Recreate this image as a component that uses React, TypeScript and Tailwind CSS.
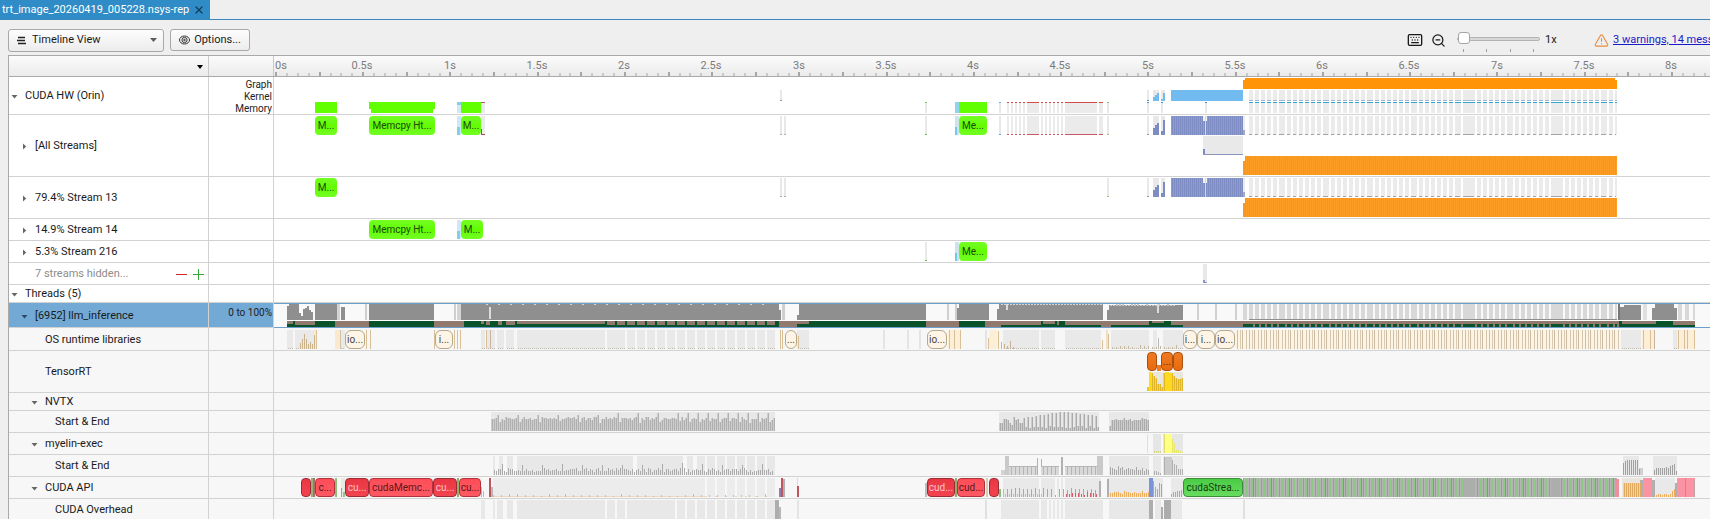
import React, { useState } from 'react';
import { TriangleAlert, ZoomOut, Keyboard, X } from 'lucide-react';

// x position of the first pixel of the tracks; all event data below uses window x
const ORIGIN = 274;

type Rect = [x: number, y: number, w: number, h: number, fill: string];

interface Block {
  x: number;
  w: number;
  y?: number;
  text?: string;
  tone: keyof typeof TONES;
}

interface RowProps {
  label: string;
  level: number;
  height: string;
  open?: boolean;
  caption?: React.ReactNode;
  muted?: boolean;
  selected?: boolean;
  actions?: React.ReactNode;
  blocks?: Block[];
  children?: React.ReactNode;
}

const TONES = {
  lime: 'bg-linear-to-b from-[#74ff22] via-[#62fb00] to-[#74ff22] text-[#1d4a08] rounded',
  cream: 'bg-[#fef5e6] border border-[#b7a78b] text-[#4a453c] rounded-md',
  red: 'bg-linear-to-b from-[#ff4d58] to-[#fd5964] border border-[#b0333c] text-[#5c161b] rounded',
  crimson: 'bg-linear-to-b from-[#e93743] to-[#f24350] border border-[#9c2b34] text-[#ffc3c8] rounded',
  green: 'bg-linear-to-b from-[#4bcb45] to-[#67dc60] border border-[#3c8f38] text-[#143d12] rounded',
  orange: 'bg-linear-to-b from-[#ee7a22] to-[#e96a0c] border border-[#a9500e] text-[#5a2a06] rounded',
};

const noise = (i: number) => {
  const v = Math.sin(i * 12.9898 + 4.1) * 43758.5453;
  return v - Math.floor(v);
};

const range = (n: number) => Array.from({ length: n }, (_, i) => i);

function Rects({ items }: { items: Rect[] }) {
  return (
    <>
      {items.map(([x, y, w, h, fill], i) => (
        <rect key={i} x={x} y={y} width={w} height={h} fill={fill} />
      ))}
    </>
  );
}

interface BarsProps {
  x: number;
  base: number;
  heights: number[];
  fill: string;
  step?: number;
  w?: number;
}

function Bars({ x, base, heights, fill, step = 2, w = 1 }: BarsProps) {
  const d = heights.map((h, i) => `M${x + i * step} ${base}v${-h}h${w}v${h}z`).join('');
  return <path d={d} fill={fill} />;
}

// graph launches of the inference loop: one slot per decode step, some of them merged
const STEPS: [number, number][] = [];
{
  let x = 1249;
  let i = 0;
  while (x < 1616) {
    const merged = i === 34 || i === 47;
    const w = merged ? 12 : i % 7 === 5 ? 6 : 4;
    STEPS.push([x, Math.min(w, 1617 - x)]);
    x += w + 2;
    i += 1;
  }
}

const RED_SLOTS: [number, number][] = [
  [1007, 2], [1011, 2], [1015, 2], [1019, 2], [1023, 2], [1027, 12],
  [1041, 2], [1045, 2], [1049, 2], [1053, 2], [1057, 2], [1061, 2],
  [1065, 32], [1099, 4],
];

function StepLane({ y, h, children }: { y: number; h: number; children?: React.ReactNode }) {
  return (
    <>
      {STEPS.map(([x, w]) => (
        <rect key={x} x={x} y={y} width={w} height={h} fill="#ebebeb" />
      ))}
      {children}
    </>
  );
}

function Patterns() {
  return (
    <svg className="absolute size-0" aria-hidden="true">
      <defs>
        <pattern id="p-orange" width="6" height="19" patternUnits="userSpaceOnUse">
          <rect width="6" height="19" fill="#fd9c22" />
          <rect x="1" width="1" height="19" fill="#f59422" />
          <rect x="3" width="1" height="19" fill="#e39a44" />
          <rect x="5" width="1" height="19" fill="#e39b48" />
        </pattern>
        <pattern id="p-purple" width="2" height="19" patternUnits="userSpaceOnUse">
          <rect width="2" height="19" fill="#8d9cd2" />
          <rect width="1" height="19" fill="#7d8cc2" />
        </pattern>
        <pattern id="p-green" width="18" height="19" patternUnits="userSpaceOnUse">
          <rect width="18" height="19" fill="#b5b5b5" />
          <rect x="1" width="1" height="19" fill="#9a9a9a" />
          <rect x="3" width="3" height="19" fill="#8dc685" />
          <rect x="7" width="1" height="19" fill="#9a9a9a" />
          <rect x="9" width="2" height="19" fill="#8dc685" />
          <rect x="11" width="1" height="19" fill="#6fa869" />
          <rect x="13" width="1" height="19" fill="#9a9a9a" />
          <rect x="15" width="2" height="19" fill="#8dc685" />
        </pattern>
        <pattern id="p-cream" width="12" height="19" patternUnits="userSpaceOnUse">
          <rect width="12" height="19" fill="#fef4e4" />
          <rect x="1" width="1" height="19" fill="#cdbfa9" />
          <rect x="4" width="1" height="19" fill="#dccbb0" />
          <rect x="6" width="1" height="19" fill="#c9bba6" />
          <rect x="10" width="1" height="19" fill="#d5c6ae" />
        </pattern>
      </defs>
    </svg>
  );
}

function Row({ label, level, height, open, caption, muted, selected, actions, blocks = [], children }: RowProps) {
  const indent = ['pl-0', 'pl-[10px]', 'pl-[20px]', 'pl-[30px]'][level];
  const bg = selected ? 'bg-[#73a9d5]' : level > 1 ? 'bg-[#f7f7f7]' : 'bg-white';
  return (
    <div className={`flex shrink-0 ${height} ${selected ? 'bg-[#f9f9f9]' : bg}`}>
      <div className={`flex w-[200px] shrink-0 items-center border-r border-b border-[#d2d2d2] pt-[2px] ${indent} ${bg}`}>
        {open === undefined ? (
          <span className="w-4" />
        ) : (
          <button type="button" aria-label={`Toggle ${label}`} className="flex w-4 items-center justify-center pr-[5px]">
            <svg width="7" height="7" viewBox="0 0 7 7" className={selected ? 'fill-[#2b4a66]' : 'fill-[#666]'}>
              <path d={open ? 'M0.5 2h6L3.5 5.4z' : 'M2 0.5v6L5.2 3.5z'} />
            </svg>
          </button>
        )}
        <span className={`text-[11px] whitespace-nowrap ${muted ? 'text-[#8c8c8c]' : 'text-[#1a1a1a]'}`}>{label}</span>
        {actions}
      </div>
      <div className={`w-[65px] shrink-0 border-r border-b border-[#d2d2d2] pr-px text-right text-[10px] leading-3 text-[#222] ${bg}`}>
        {caption}
      </div>
      <div
        className={`relative min-w-0 flex-1 overflow-hidden border-b ${selected ? 'border-t border-[#6c9fcb]' : 'border-[#d2d2d2]'}`}
      >
        <svg className="absolute inset-0 size-full" shapeRendering="crispEdges" aria-hidden="true">
          <g transform={`translate(${-ORIGIN} 0)`}>{children}</g>
        </svg>
        {blocks.map((b, i) => (
          <div
            key={i}
            className={`absolute flex h-[19px] items-center justify-center overflow-hidden text-[10px] whitespace-nowrap ${TONES[b.tone]}`}
            style={{ left: b.x - ORIGIN, width: b.w, top: b.y ?? 1 }}
          >
            {b.text}
          </div>
        ))}
      </div>
    </div>
  );
}

function Ruler() {
  return (
    <div className="flex h-[21px] shrink-0 border-b border-[#a9a9a9] bg-linear-to-b from-[#fbfbfb] to-[#ebebeb]">
      <div className="flex w-[200px] shrink-0 items-center justify-end border-r border-[#c9c9c9] pt-[2px] pr-1">
        <button type="button" aria-label="Sort rows">
          <svg width="8" height="6" viewBox="0 0 8 6" className="fill-black">
            <path d="M1 1h6L4 5z" />
          </svg>
        </button>
      </div>
      <div className="w-[65px] shrink-0 border-r border-[#c9c9c9]" />
      <div className="relative min-w-0 flex-1 overflow-hidden">
        <svg className="absolute inset-0 size-full" shapeRendering="crispEdges" aria-hidden="true">
          {range(132).map(i => {
            const x = Math.round(1 + i * 10.906);
            return i % 4 === 0 ? (
              <rect key={i} x={x} y="16" width="2" height="4" fill="#a6a6a6" />
            ) : (
              <rect key={i} x={x} y="17" width="2" height="3" fill="#c9c9c9" />
            );
          })}
        </svg>
        {range(17).map(i => (
          <span
            key={i}
            className={`absolute top-0 text-[11px] leading-5 text-[#7b7b7b] ${i === 0 ? '' : '-translate-x-1/2'}`}
            style={{ left: i === 0 ? 1 : Math.round(i * 87.25) + 1 }}
          >
            {i / 2}s
          </span>
        ))}
      </div>
    </div>
  );
}

function thin(x: number, y: number, h: number, tip: string, tipTop = false): Rect[] {
  return [
    [x, y, 2, h, '#e8e8e8'],
    [x, tipTop ? y : y + h - 1, 2, 1, tip],
  ];
}

// kernels seen on the stream lanes
const KERNELS: Rect[] = [
  ...thin(780, 1, 19, '#b0b0b0'),
  ...thin(784, 1, 19, '#b0b0b0'),
  ...thin(1107, 1, 19, '#a9c07a'),
  ...thin(1147, 1, 19, '#999'),
  [1153, 1, 6, 19, '#e8e8e8'],
  [1153, 13, 2, 7, '#7d8cc2'],
  [1155, 10, 2, 10, '#7d8cc2'],
  [1157, 8, 2, 12, '#7d8cc2'],
  [1161, 1, 4, 19, '#e8e8e8'],
  [1161, 16, 2, 4, '#7d8cc2'],
  [1163, 5, 2, 15, '#7d8cc2'],
  [1171, 1, 72, 19, 'url(#p-purple)'],
  [1203, 1, 4, 5, '#f3f3f3'],
  [1205, 1, 1, 19, '#d8d8e0'],
  [1243, 1, 2, 19, '#ebebeb'],
  [1243, 15, 2, 5, '#a5abc0'],
];

function StepTicks({ y }: { y: number }) {
  return (
    <g fill="#a2a2a8">
      {STEPS.map(([x, w]) => (
        <rect key={x} x={x} y={y} width={w - 1} height="1" />
      ))}
    </g>
  );
}

// CPU utilisation of the thread: x, width, load height, colour
const LOAD: [number, number, number, string][] = [
  [287, 2, 14, '#8f8f8f'], [289, 10, 16, '#8f8f8f'], [299, 2, 7, '#8f8f8f'], [301, 2, 4, '#8f8f8f'],
  [303, 2, 11, '#8f8f8f'], [305, 2, 12, '#8f8f8f'], [307, 2, 14, '#8f8f8f'], [309, 2, 10, '#8f8f8f'],
  [311, 2, 8, '#8f8f8f'], [315, 22, 16, '#8f8f8f'], [337, 3, 16, '#d4d4d4'], [341, 4, 13, '#8f8f8f'],
  [365, 2, 16, '#cfcfcf'], [369, 65, 16, '#8f8f8f'], [454, 2, 16, '#cfcfcf'], [457, 4, 16, '#d4d4d4'],
  [461, 318, 16, '#8f8f8f'], [779, 2, 10, '#8f8f8f'], [782, 3, 16, '#cfcfcf'], [797, 2, 5, '#8f8f8f'],
  [799, 127, 16, '#8f8f8f'], [947, 2, 16, '#cfcfcf'], [955, 2, 16, '#cfcfcf'], [957, 2, 12, '#8f8f8f'],
  [959, 30, 16, '#8f8f8f'], [997, 2, 11, '#8f8f8f'], [999, 104, 16, '#8f8f8f'], [1107, 2, 10, '#8f8f8f'],
  [1109, 74, 15, '#8f8f8f'], [1197, 2, 16, '#d0d0d0'], [1215, 2, 16, '#d0d0d0'], [1235, 2, 16, '#d0d0d0'],
  [1243, 4, 16, '#d8d8d8'], [1618, 2, 16, '#777'], [1620, 4, 13, '#8f8f8f'], [1624, 17, 15, '#8f8f8f'],
  [1643, 4, 16, '#e0e0e0'], [1652, 3, 12, '#8f8f8f'], [1655, 19, 16, '#8f8f8f'], [1674, 3, 12, '#8f8f8f'],
  [1678, 4, 16, '#d8d8d8'], [1685, 4, 16, '#d8d8d8'], [1693, 2, 16, '#d8d8d8'],
];

// [x, width, share of the lane] of the blocked state on top of the running state
const IDLE: [number, number, number][] = [
  [287, 6, 3], [295, 20, 4], [335, 34, 6], [434, 30, 6], [481, 3, 3], [486, 4, 4], [498, 4, 4],
  [506, 9, 4], [517, 88, 3], [779, 18, 6], [797, 12, 3], [926, 33, 6], [985, 16, 6], [1001, 40, 4],
  [1043, 12, 3], [1057, 2, 4], [1065, 38, 4], [1101, 10, 6], [1111, 38, 4], [1152, 12, 2],
  [1171, 72, 4], [1183, 60, 6], [1243, 374, 3], [1622, 34, 3], [1673, 22, 4],
];

const OS_GREY: [number, number][] = [
  [287, 6], [295, 18], [340, 5], [481, 4], [487, 8], [497, 7], [506, 8], [517, 88], [607, 18], [627, 8],
  [637, 8], [647, 8], [657, 8], [667, 8], [677, 8], [687, 8], [697, 8], [707, 8], [717, 8], [727, 8],
  [737, 8], [747, 8], [757, 8], [767, 8], [797, 12], [1003, 36], [1041, 14], [1065, 36], [1111, 38],
  [1153, 4], [1163, 20], [1621, 20], [1673, 4],
];

const nvtxA = range(142).map(i => {
  const period = i > 90 ? 5 : 10;
  if (i % period === 3) return i > 60 ? 18 : 16;
  if (i % period === 4) return 8 + Math.round(noise(i) * 2);
  return 11 + Math.round(noise(i) * 3);
});
const nvtxB = range(50).map(i => {
  if (i < 12) return 5 + Math.round(noise(i) * 9);
  if (i % 2) return 3 + Math.round(noise(i) * 2);
  return i < 34 ? Math.min(19, 13 + Math.round((i - 12) / 3)) : 19 - Math.round((i - 34) / 4);
});
const nvtxC = range(20).map(i => (i === 0 ? 5 : 10 + Math.round(noise(i + 9) * 3)));
const myelinA = range(140).map(i => (i % 10 === 4 ? 9 + Math.round(noise(i) * 3) : 3 + Math.round(noise(i) * 4)));

function ZoomSlider({ value, onChange }: { value: number; onChange: (n: number) => void }) {
  return (
    <div className="flex h-full flex-col gap-[2px] pt-[6px]">
      <input
        type="range"
        aria-label="Zoom"
        min={1}
        max={100}
        value={value}
        onChange={e => onChange(Number(e.target.value))}
        className="h-4 w-[83px] appearance-none bg-transparent [&::-webkit-slider-runnable-track]:h-1 [&::-webkit-slider-runnable-track]:rounded-sm [&::-webkit-slider-runnable-track]:border [&::-webkit-slider-runnable-track]:border-[#b3b3b3] [&::-webkit-slider-runnable-track]:bg-[#d8d8d8] [&::-webkit-slider-thumb]:-mt-[6px] [&::-webkit-slider-thumb]:size-3 [&::-webkit-slider-thumb]:appearance-none [&::-webkit-slider-thumb]:rounded-[3px] [&::-webkit-slider-thumb]:border [&::-webkit-slider-thumb]:border-[#a6a6a6] [&::-webkit-slider-thumb]:bg-white"
      />
      <div className="flex justify-between px-[6px]">
        {range(4).map(i => (
          <span key={i} className="h-[3px] w-px bg-[#a0a0a0]" />
        ))}
      </div>
    </div>
  );
}

export default function App() {
  const [view, setView] = useState('timeline');
  const [zoom, setZoom] = useState(1);

  return (
    <div className="flex h-screen flex-col overflow-hidden bg-[#efefef] font-[Roboto,sans-serif] text-[11px] text-[#1a1a1a]">
      <Patterns />

      {/* Document tabs */}
      <div className="flex h-5 shrink-0 border-b border-[#3c86bb]">
        <div className="flex w-[210px] items-center gap-1 bg-[#308cc6] pt-px pl-[2px] text-white">
          <span className="whitespace-nowrap">trt_image_20260419_005228.nsys-rep</span>
          <button type="button" aria-label="Close report" className="text-[#123c58]">
            <X size={12} strokeWidth={2.5} />
          </button>
        </div>
      </div>

      {/* Toolbar */}
      <div className="flex h-[35px] shrink-0 items-center gap-[6px] pt-[5px] pl-2">
        <div className="relative flex h-[23px] w-[156px] items-center rounded-[3px] border border-[#a8a8a8] bg-linear-to-b from-[#fdfdfd] to-[#ececec]">
          <svg width="10" height="9" viewBox="0 0 10 9" className="absolute left-2 stroke-[#222]" strokeWidth="1.3">
            <path d="M1 1.5h7M0 4.5h8M1 7.5h8" />
          </svg>
          <select
            aria-label="View"
            value={view}
            onChange={e => setView(e.target.value)}
            className="size-full appearance-none bg-transparent pl-[23px] focus:outline-none"
          >
            <option value="timeline">Timeline View</option>
            <option value="analysis">Analysis Summary</option>
          </select>
          <svg width="7" height="4" viewBox="0 0 7 4" className="pointer-events-none absolute right-[6px] fill-[#5c5c5c]">
            <path d="M0 0h7L3.5 4z" />
          </svg>
        </div>
        <button
          type="button"
          className="flex h-[22px] w-20 items-center justify-center gap-1 rounded-[3px] border border-[#a8a8a8] bg-linear-to-b from-[#fdfdfd] to-[#ececec]"
        >
          <svg width="11" height="10" viewBox="0 0 11 10" fill="none" className="stroke-[#333]">
            <ellipse cx="5.5" cy="5" rx="5" ry="4" />
            <circle cx="5.5" cy="5" r="2.6" />
            <circle cx="5.5" cy="5" r="0.8" />
          </svg>
          Options...
        </button>

        <div className="ml-auto flex h-full items-center">
          <button type="button" aria-label="Keyboard shortcuts" className="mr-2">
            <Keyboard size={16} strokeWidth={2} />
          </button>
          <button type="button" aria-label="Reset zoom" className="mr-[11px]">
            <ZoomOut size={15} strokeWidth={2} />
          </button>
          <ZoomSlider value={zoom} onChange={setZoom} />
          <span className="ml-[5px] w-[49px]">{zoom}x</span>
          <TriangleAlert size={15} strokeWidth={1.8} className="mr-1 text-[#ee8a3c]" />
          <a href="#messages" className="w-[97px] overflow-hidden whitespace-nowrap text-[#1a1ac8] underline">
            3 warnings, 14 messages
          </a>
        </div>
      </div>

      {/* Timeline */}
      <div className="ml-2 flex min-h-0 flex-1 flex-col overflow-hidden border-t border-l border-[#a9a9a9] bg-[#f7f7f7]">
        <Ruler />

        <Row
          label="CUDA HW (Orin)"
          level={0}
          height="h-[38px]"
          open
          caption={
            <div className="pt-[2px]">
              <div>Graph</div>
              <div>Kernel</div>
              <div>Memory</div>
            </div>
          }
        >
          <Rects
            items={[
              [315, 25, 22, 11, '#62ff00'],
              [369, 25, 66, 7, '#62ff00'],
              [371, 25, 62, 11, '#62ff00'],
              [457, 25, 4, 11, '#cfe9f4'],
              [457, 25, 4, 3, '#7fd0ea'],
              [461, 25, 20, 11, '#62ff00'],
              [481, 25, 4, 11, '#ebebeb'],
              [481, 25, 4, 1, '#c05a5a'],
              ...thin(780, 13, 11, '#999'),
              ...thin(925, 25, 11, '#7cc46a', true),
              [955, 25, 4, 11, '#8fd3ee'],
              [959, 25, 28, 11, '#62ff00'],
              ...thin(999, 25, 11, '#5ab8d8', true),
              ...RED_SLOTS.flatMap(([x, w]): Rect[] => [
                [x, 25, w, 11, '#ebebeb'],
                [x, 25, w, 1, '#d84a4a'],
              ]),
              ...thin(1107, 25, 11, '#7cc46a', true),
              ...thin(1147, 13, 11, '#3f93c9'),
              ...thin(1147, 25, 11, '#3f93c9', true),
              [1153, 13, 6, 11, '#e8e8e8'],
              [1153, 20, 2, 4, '#72bbf0'],
              [1155, 18, 2, 6, '#72bbf0'],
              [1157, 16, 2, 8, '#72bbf0'],
              [1161, 13, 4, 11, '#e8e8e8'],
              [1161, 22, 2, 2, '#72bbf0'],
              [1163, 16, 2, 8, '#72bbf0'],
              ...thin(1161, 25, 11, '#3f93c9', true),
              [1171, 13, 72, 11, '#72bbf0'],
              ...thin(1205, 25, 11, '#3f93c9', true),
              [1245, 1, 370, 11, '#ff9409'],
              [1243, 3, 374, 9, '#ff9409'],
            ]}
          />
          <StepLane y={13} h={11}>
            <StepLane y={25} h={11} />
            {STEPS.map(([x, w]) => (
              <g key={x}>
                <rect x={x} y="23" width={w} height="1" fill="#9db9d6" />
                <rect x={x} y="25" width={w} height="1" fill="#33a7cf" />
              </g>
            ))}
          </StepLane>
        </Row>

        <Row
          label="[All Streams]"
          level={1}
          height="h-[62px]"
          open={false}
          blocks={[
            { x: 315, w: 22, text: 'M...', tone: 'lime' },
            { x: 369, w: 66, text: 'Memcpy Ht...', tone: 'lime' },
            { x: 461, w: 20, text: 'M...', tone: 'lime' },
            { x: 959, w: 28, text: 'Me...', tone: 'lime' },
          ]}
        >
          <Rects
            items={[
              [457, 1, 4, 19, '#cfe9f4'],
              [457, 12, 3, 8, '#7fd0ea'],
              [481, 1, 4, 19, '#ebebeb'],
              [481, 14, 1, 6, '#b04a4a'],
              [481, 19, 4, 1, '#b04a4a'],
              ...thin(925, 1, 19, '#6cb84a'),
              [955, 1, 4, 19, '#cfe3ea'],
              [955, 12, 2, 8, '#6fc9ea'],
              ...thin(999, 1, 19, '#4db4d6'),
              ...RED_SLOTS.flatMap(([x, w]): Rect[] => [
                [x, 1, w, 19, '#ebebeb'],
                [x, 19, w, 1, '#c95b68'],
              ]),
              ...KERNELS,
              [1203, 21, 40, 19, '#e9e9e9'],
              [1203, 34, 2, 6, '#7d8cc2'],
              [1203, 39, 40, 1, '#8b96bd'],
            ]}
          />
          <StepLane y={1} h={19} />
          <StepTicks y={19} />
          <g transform="translate(0 41)">
            <rect x="1243" y="5" width="2" height="14" fill="#f5992c" />
            <rect x="1245" width="372" height="19" fill="url(#p-orange)" />
          </g>
        </Row>

        <Row
          label="79.4% Stream 13"
          level={1}
          height="h-[42px]"
          open={false}
          blocks={[{ x: 315, w: 22, text: 'M...', tone: 'lime' }]}
        >
          <Rects items={KERNELS} />
          <StepLane y={1} h={19} />
          <StepTicks y={19} />
          <g transform="translate(0 21)">
            <rect x="1243" y="5" width="2" height="14" fill="#f5992c" />
            <rect x="1245" width="372" height="19" fill="url(#p-orange)" />
          </g>
        </Row>

        <Row
          label="14.9% Stream 14"
          level={1}
          height="h-[22px]"
          open={false}
          blocks={[
            { x: 369, w: 66, text: 'Memcpy Ht...', tone: 'lime' },
            { x: 461, w: 22, text: 'M...', tone: 'lime' },
          ]}
        >
          <Rects items={[[457, 1, 4, 19, '#cfe9f4'], [457, 12, 3, 8, '#7fd0ea']]} />
        </Row>

        <Row
          label="5.3% Stream 216"
          level={1}
          height="h-[22px]"
          open={false}
          blocks={[{ x: 959, w: 28, text: 'Me...', tone: 'lime' }]}
        >
          <Rects items={[...thin(925, 1, 19, '#6cb84a'), [955, 1, 4, 19, '#cfe3ea'], [955, 12, 2, 8, '#6fc9ea']]} />
        </Row>

        <Row
          label="7 streams hidden..."
          level={1}
          height="h-[22px]"
          muted
          actions={
            <span className="mr-1 ml-auto flex gap-[6px]">
              <button type="button" aria-label="Hide more streams">
                <svg width="11" height="11" viewBox="0 0 11 11" className="stroke-[#d02a2a]">
                  <path d="M0 5.5h11" />
                </svg>
              </button>
              <button type="button" aria-label="Show more streams">
                <svg width="11" height="11" viewBox="0 0 11 11" className="stroke-[#37a537]">
                  <path d="M0 5.5h11M5.5 0v11" />
                </svg>
              </button>
            </span>
          }
        >
          <Rects items={[[1203, 1, 4, 19, '#e8e8e8'], [1203, 17, 2, 3, '#8b96bd'], [1205, 19, 2, 1, '#8b96bd']]} />
        </Row>

        <Row label="Threads (5)" level={0} height="h-[18px]" open />

        <Row
          label="[6952] llm_inference"
          level={1}
          height="h-[25px]"
          open
          selected
          caption={<div className="pt-1">0 to 100%</div>}
        >
          {STEPS.map(([x, w]) => (
            <rect key={x} x={x} y="0" width={w} height="15" fill="#d8d8d8" />
          ))}
          {LOAD.map(([x, w, h, fill]) => (
            <rect key={x} x={x} y={16 - h} width={w} height={h} fill={fill} />
          ))}
          <Bars x={486} base={1} step={12} w={2} heights={range(24).map(() => 1)} fill="#d5d5d5" />
          <Bars x={1001} base={1} step={3} w={2} heights={range(34).map(() => 1)} fill="#d5d5d5" />
          <Bars x={1110} base={2} step={3} w={2} heights={range(22).map(i => 1 + Math.round(noise(i)))} fill="#c8c8c8" />
          <Rects
            items={[
              [489, 3, 2, 12, '#dcdcdc'],
              [1006, 0, 2, 6, '#dcdcdc'],
              [1157, 0, 2, 9, '#dcdcdc'],
              [1249, 15, 368, 1, '#8f8f8f'],
              [287, 16, 1408, 1, '#ffffff'],
              [287, 17, 1408, 6, '#0a5229'],
            ]}
          />
          {IDLE.map(([x, w, h]) => (
            <rect key={x} x={x} y="17" width={w} height={h} fill="#92796d" />
          ))}
          <Bars x={607} base={21} step={10} w={8} heights={range(17).map(() => 4)} fill="#92796d" />
          {STEPS.map(([x, w]) => (
            <rect key={x} x={x + w} y="17" width="2" height="6" fill="#92796d" />
          ))}
        </Row>

        <Row
          label="OS runtime libraries"
          level={2}
          height="h-[23px]"
          blocks={[
            { x: 345, w: 20, y: 2, text: 'io...', tone: 'cream' },
            { x: 435, w: 18, y: 2, text: 'i...', tone: 'cream' },
            { x: 785, w: 12, y: 2, text: '...', tone: 'cream' },
            { x: 927, w: 20, y: 2, text: 'io...', tone: 'cream' },
            { x: 1183, w: 14, y: 2, text: 'i...', tone: 'cream' },
            { x: 1197, w: 18, y: 2, text: 'i...', tone: 'cream' },
            { x: 1215, w: 20, y: 2, text: 'io...', tone: 'cream' },
          ]}
        >
          {OS_GREY.map(([x, w]) => (
            <g key={x}>
              <rect x={x} y="2" width={w} height="19" fill="#e9e9e9" />
              <path d={`M${x + 1} 20.5h${w - 1}`} stroke="#bdb8ae" strokeDasharray="1 1" />
            </g>
          ))}
          <Rects
            items={[
              [313, 2, 4, 19, '#fbe9cf'], [316, 2, 1, 19, '#d9bf95'],
              [335, 2, 5, 19, '#fbe9cf'], [340, 2, 1, 19, '#d3c2a5'],
              [366, 2, 1, 19, '#d9bf95'], [370, 2, 1, 19, '#d9bf95'],
              [434, 2, 1, 19, '#d9bf95'], [454, 2, 1, 19, '#d9bf95'], [457, 2, 1, 19, '#d9bf95'], [460, 2, 1, 19, '#d9bf95'],
              [486, 2, 1, 19, '#d9bf95'], [490, 2, 1, 19, '#cbb3a0'],
              [780, 2, 1, 19, '#d9bf95'], [782, 2, 1, 19, '#d9bf95'], [798, 8, 1, 13, '#d9bf95'],
              [883, 2, 2, 19, '#e4e4e4'], [907, 2, 2, 19, '#e4e4e4'], [919, 2, 2, 19, '#e4e4e4'],
              [948, 2, 12, 19, '#fdeed7'], [949, 2, 1, 19, '#d9bf95'], [954, 2, 1, 19, '#d9bf95'], [960, 2, 1, 19, '#d9bf95'],
              [985, 2, 2, 19, '#e4e4e4'], [989, 2, 8, 19, '#fdeed7'], [988, 10, 1, 11, '#d9bf95'], [998, 3, 1, 18, '#d9bf95'],
              [1102, 12, 1, 9, '#d9bf95'], [1106, 2, 2, 19, '#f3dfbf'], [1108, 6, 1, 15, '#d9bf95'],
              [1158, 10, 1, 11, '#b9b9b9'],
              [1235, 2, 384, 19, 'url(#p-cream)'],
              [1642, 2, 12, 19, '#fdeed7'], [1643, 2, 1, 19, '#d9bf95'], [1650, 2, 1, 19, '#d9bf95'], [1654, 2, 1, 19, '#cbb3a0'],
              [1677, 2, 18, 19, '#fdeed7'], [1678, 2, 1, 19, '#d9bf95'], [1684, 2, 1, 19, '#d9bf95'], [1687, 2, 1, 19, '#d9bf95'], [1694, 2, 1, 19, '#d9bf95'],
            ]}
          />
          <Bars x={300} base={21} heights={[6, 10, 15, 10, 5, 7, 5, 14]} fill="#c9b28c" />
          <Bars x={1001} base={21} step={3} heights={[7, 5, 3, 8, 2]} fill="#c9b28c" />
          <Bars x={1112} base={21} step={4} heights={range(17).map(i => 1 + Math.round(noise(i) * 3))} fill="#c6b79d" />
        </Row>

        <Row
          label="TensorRT"
          level={2}
          height="h-[42px]"
          blocks={[
            { x: 1147, w: 10, tone: 'orange' },
            { x: 1161, w: 12, text: '...', tone: 'orange' },
            { x: 1173, w: 10, tone: 'orange' },
          ]}
        >
          <Rects
            items={[
              [1157, 14, 4, 6, '#ef7b24'],
              [1149, 21, 34, 19, '#e9e6dc'],
              [1147, 36, 2, 4, '#e6c62a'],
            ]}
          />
          <Bars x={1149} base={40} w={2} heights={[19, 18, 15, 13, 7, 7, 4, 18, 19, 19, 18, 18, 15, 13, 12, 12, 13]} fill="#ffd91c" />
          <Bars x={1152} base={40} heights={[18, 15, 13, 7, 7, 4, 18]} fill="#dfb52a" />
          <Bars x={1172} base={40} heights={[18, 15, 13, 12, 12, 13]} fill="#dfb52a" />
        </Row>

        <Row label="NVTX" level={2} height="h-[18px]" open />

        <Row label="Start &amp; End" level={3} height="h-[22px]">
          <Rects items={[[491, 1, 284, 19, '#e8e8e8'], [999, 1, 100, 19, '#e8e8e8'], [1109, 1, 40, 19, '#e8e8e8']]} />
          <Bars x={491} base={20} w={2} heights={nvtxA} fill="#cdcdcd" />
          <Bars x={492} base={20} heights={nvtxA} fill="#b0b0b0" />
          <Bars x={999} base={20} w={2} heights={nvtxB} fill="#cdcdcd" />
          <Bars x={1000} base={20} heights={nvtxB} fill="#ababab" />
          <Bars x={1109} base={20} w={2} heights={nvtxC} fill="#cdcdcd" />
          <Bars x={1110} base={20} heights={nvtxC} fill="#ababab" />
        </Row>

        <Row label="myelin-exec" level={2} height="h-[22px]" open>
          <Rects
            items={[
              [1147, 1, 1, 19, '#dedede'],
              [1153, 1, 8, 19, '#e6e6e6'],
              [1163, 1, 20, 19, '#e6e6e6'],
              [1164, 1, 8, 19, '#ffff80'],
              [1164, 1, 1, 19, '#dcdc70'],
            ]}
          />
          <Bars x={1154} base={20} heights={[2, 2, 2, 2]} fill="#d6d68a" />
          <Bars x={1172} base={20} heights={[14, 10, 3, 3, 2, 1]} fill="#e6e66c" />
        </Row>

        <Row label="Start &amp; End" level={3} height="h-[22px]">
          <Rects
            items={[
              [493, 1, 2, 19, '#e8e8e8'], [499, 1, 4, 19, '#e8e8e8'], [507, 1, 6, 19, '#e8e8e8'], [517, 1, 116, 19, '#e8e8e8'],
              [637, 1, 46, 19, '#e8e8e8'], [687, 1, 6, 19, '#e8e8e8'],
              ...range(8).map((i): Rect => [697 + i * 10, 1, 8, 19, '#e8e8e8']),
              [1109, 1, 40, 19, '#e8e8e8'], [1153, 1, 8, 19, '#e8e8e8'], [1163, 1, 20, 19, '#e8e8e8'],
              [1001, 15, 4, 5, '#d2d2d2'], [1005, 1, 4, 19, '#c9c9c9'],
              [1009, 11, 28, 9, '#d9d9d9'], [1009, 11, 28, 1, '#b5b5b5'], [1037, 3, 1, 17, '#b0b0b0'], [1041, 4, 1, 16, '#b0b0b0'],
              [1041, 11, 18, 9, '#d9d9d9'], [1041, 11, 18, 1, '#b5b5b5'], [1061, 2, 2, 18, '#b0b0b0'],
              [1065, 11, 32, 9, '#d9d9d9'], [1065, 11, 32, 1, '#b5b5b5'], [1097, 1, 6, 19, '#c9c9c9'],
              [1164, 2, 8, 18, '#cacaca'], [1164, 2, 1, 18, '#adadad'],
              [1623, 1, 16, 19, '#e8e8e8'], [1653, 1, 24, 19, '#e8e8e8'], [1639, 13, 4, 7, '#d0d0d0'],
            ]}
          />
          <Bars x={1011} base={20} step={4} heights={range(22).map(i => (i === 7 || i === 12 || i === 13 ? 0 : 8))} fill="#b5b5b5" />
          <Bars x={494} base={20} heights={myelinA} fill="#ababab" />
          <Bars x={1110} base={20} heights={range(20).map(i => 4 + Math.round(noise(i + 3) * 5))} fill="#a8a8a8" />
          <Bars x={1154} base={20} heights={[4, 4, 3, 2]} fill="#b0b0b0" />
          <Bars x={1172} base={20} heights={[15, 11, 10, 6, 6, 6]} fill="#b0b0b0" />
          <Bars x={1623} base={20} heights={[12, 14, 15, 15, 15, 15, 15, 15, 6]} fill="#a0a0a0" />
          <Bars x={1654} base={20} heights={[5, 7, 7, 7, 7, 7, 8, 7, 9, 10, 11, 4]} fill="#a0a0a0" />
        </Row>

        <Row
          label="CUDA API"
          level={2}
          height="h-[22px]"
          open
          blocks={[
            { x: 301, w: 10, tone: 'crimson' },
            { x: 315, w: 20, text: 'c...', tone: 'red' },
            { x: 345, w: 24, text: 'cu...', tone: 'crimson' },
            { x: 369, w: 64, text: 'cudaMemc...', tone: 'red' },
            { x: 433, w: 24, text: 'cu...', tone: 'crimson' },
            { x: 459, w: 22, text: 'cu...', tone: 'red' },
            { x: 927, w: 28, text: 'cud...', tone: 'crimson' },
            { x: 957, w: 28, text: 'cud...', tone: 'red' },
            { x: 989, w: 10, tone: 'crimson' },
            { x: 1183, w: 60, text: 'cudaStrea...', tone: 'green' },
          ]}
        >
          <Rects
            items={[
              [311, 1, 2, 19, '#9cae74'], [313, 1, 2, 19, '#a8706a'], [335, 1, 2, 19, '#8fbe78'],
              [341, 1, 4, 19, '#e6ece4'], [341, 11, 1, 9, '#7fb886'], [343, 15, 2, 5, '#8fc495'],
              [457, 1, 2, 19, '#8fae6a'], [481, 10, 1, 10, '#b8b8b8'], [483, 14, 1, 6, '#b8b8b8'],
              [489, 1, 2, 19, '#c0555f'], [491, 10, 2, 10, '#b8b8b8'],
              [493, 1, 212, 19, '#ececec'], [493, 19, 282, 1, '#ecd9bd'],
              ...range(7).map((i): Rect => [707 + i * 10, 1, 8, 19, '#ececec']),
              [779, 11, 2, 9, '#8b80b0'], [781, 1, 2, 19, '#c0555f'], [783, 2, 2, 18, '#b0b0b0'],
              [797, 1, 1, 19, '#dcdcdc'], [797, 9, 2, 11, '#c0555f'],
              [925, 6, 2, 14, '#bdbdbd'], [955, 1, 2, 19, '#8fae6a'], [986, 1, 2, 19, '#d6cdb4'], [999, 12, 2, 8, '#8cbf7e'],
              [1003, 1, 36, 19, '#e9e9e9'], [1041, 1, 14, 19, '#e9e9e9'], [1057, 1, 2, 19, '#e9e9e9'], [1061, 1, 2, 19, '#e9e9e9'],
              [1065, 1, 36, 19, '#e9e9e9'], [1099, 4, 2, 16, '#b0b0b0'], [1107, 1, 42, 19, '#e9e9e9'], [1107, 2, 2, 18, '#b0b0b0'],
              [1149, 1, 4, 19, '#7a94dc'], [1153, 1, 10, 19, '#e9e9e9'], [1171, 1, 12, 19, '#e9e9e9'],
              [1243, 1, 374, 19, 'url(#p-green)'], [1463, 1, 12, 19, '#adadad'], [1551, 1, 9, 19, '#adadad'],
              [1615, 2, 4, 18, '#f08f9c'],
              [1622, 1, 20, 19, '#e9e6e0'], [1623, 6, 18, 14, '#f3d3a0'], [1640, 3, 3, 17, '#b0b0b0'],
              [1643, 1, 9, 19, '#fb93a3'], [1652, 3, 3, 17, '#b0b0b0'], [1655, 1, 20, 19, '#e9e9e9'],
              [1675, 6, 2, 14, '#b0b0b0'], [1677, 1, 18, 19, '#fb93a3'], [1685, 1, 1, 19, '#d87f8c'], [1694, 3, 1, 17, '#c0a0a4'],
            ]}
          />
          <Bars x={493} base={20} step={8} heights={range(35).map(i => 1 + Math.round(noise(i) * 2))} fill="#cbbba5" />
          <Bars x={1003} base={20} heights={range(20).map(i => (i % 2 ? 3 : 8))} fill="#e5b877" />
          <Bars x={1007} base={20} step={4} heights={range(23).map(i => (i === 8 || i === 12 ? 2 : 7 + Math.round(noise(i) * 2)))} fill="#a9a9a9" />
          <Bars x={1066} base={20} step={3} heights={range(11).map(i => 2 + Math.round(noise(i) * 3))} fill="#d95c68" />
          <Bars x={1110} base={20} heights={range(20).map(i => 3 + Math.round(noise(i) * 3))} fill="#ecae5e" />
          <Bars x={1153} base={20} heights={[16, 10, 8, 14, 13]} fill="#a9a9a9" />
          <Bars x={1171} base={20} heights={[3, 5, 5, 6, 6, 7]} fill="#a9a9a9" />
          <Bars x={1624} base={20} heights={range(9).map(() => 14)} fill="#e0ab60" />
          <Bars x={1656} base={20} heights={[2, 3, 3, 2, 3, 3, 2, 3, 6, 8]} fill="#ecae5e" />
        </Row>

        <Row label="CUDA Overhead" level={3} height="h-[22px]">
          <Rects
            items={[
              [481, 1, 4, 19, '#e8e8e8'], [493, 1, 2, 19, '#e8e8e8'], [497, 1, 6, 19, '#e8e8e8'], [507, 1, 6, 19, '#e8e8e8'],
              [517, 1, 88, 19, '#e8e8e8'], [607, 1, 8, 19, '#e8e8e8'], [617, 1, 8, 19, '#e8e8e8'], [627, 1, 48, 19, '#e8e8e8'],
              ...range(10).map((i): Rect => [677 + i * 10, 1, 8, 19, '#e8e8e8']),
              [775, 1, 4, 19, '#adadad'], [779, 8, 2, 12, '#b8b8b8'], [797, 1, 2, 19, '#e4e4e4'], [985, 1, 2, 19, '#e0e0e0'],
              [1001, 1, 38, 19, '#e8e8e8'], [1041, 1, 6, 19, '#e8e8e8'], [1049, 1, 2, 19, '#e8e8e8'], [1053, 1, 2, 19, '#e8e8e8'],
              [1057, 1, 2, 19, '#e8e8e8'], [1061, 1, 2, 19, '#e8e8e8'], [1065, 1, 38, 19, '#e8e8e8'], [1109, 1, 40, 19, '#e8e8e8'],
              [1149, 1, 4, 19, '#adadad'], [1155, 1, 6, 19, '#e8e8e8'], [1161, 8, 2, 12, '#adadad'], [1164, 1, 7, 19, '#adadad'],
              [1171, 1, 11, 19, '#e8e8e8'], [1243, 1, 2, 19, '#e0e0e0'],
            ]}
          />
        </Row>
      </div>
    </div>
  );
}
